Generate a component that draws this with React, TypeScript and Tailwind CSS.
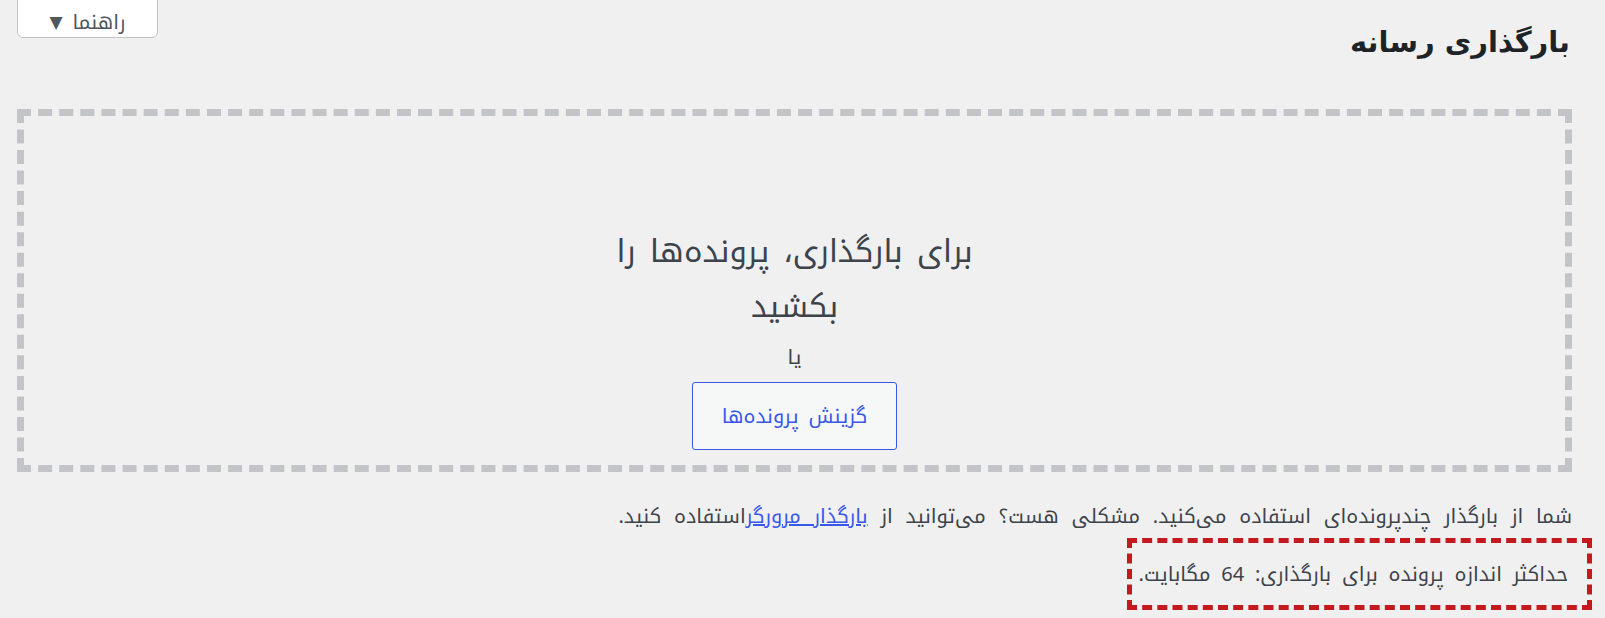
export default function App() {
  return (
    <div
      dir="rtl"
      className="min-h-[618px] w-full overflow-hidden bg-[#f0f0f1] pl-[17px] pr-[33px] font-['Noto_Kufi_Arabic','DejaVu_Sans',sans-serif] text-[#3c434a]"
    >
      {/* Title + help tab */}
      <div className="flex items-start justify-between">
        <h1 className="mr-[2px] pt-[23px] font-['DejaVu_Sans',sans-serif] text-[29px] font-bold leading-[38px] text-[#1d2327]">
          بارگذاری رسانه
        </h1>
        <button className="-mt-[12px] flex h-[50px] w-[141px] items-center justify-center gap-[10px] rounded-b-[6px] border border-[#c3c4c7] bg-white pt-[22px] pb-[4px] text-[20px] leading-none text-[#50575e]">
          <span className="leading-[24px]">راهنما</span>
          <span className="font-['DejaVu_Sans',sans-serif] text-[17px] leading-[24px]">▼</span>
        </button>
      </div>

      {/* Drop zone */}
      <div className="mt-[48px] flex h-[363px] flex-col items-center border-[7px] border-dashed border-[#c3c4c7] pt-[108px]">
        <p className="text-center text-[31px] leading-[55px] [word-spacing:4px]">
          برای بارگذاری، پرونده‌ها را
          <br />
          بکشید
        </p>
        <p className="mt-[8px] text-[20px] leading-[30px]">یا</p>
        <button className="mt-[10px] h-[68px] w-[205px] rounded-[3px] border border-[#3858e9] bg-[#f6f7f7] text-[20px] text-[#3858e9] [word-spacing:3px]">
          گزینش پرونده‌ها
        </button>
      </div>

      {/* Notes */}
      <p className="mt-[30px] text-[20px] leading-[28px] [word-spacing:6px]">
        شما از بارگذار چندپرونده‌ای استفاده می‌کنید. مشکلی هست؟ می‌توانید از{" "}
        <a href="#" className="text-[#3858e9] underline">
          بارگذار مرورگر
        </a>
        استفاده کنید.
      </p>
      <div className="mr-[-20px] mt-[8px] flex">
        <p className="border-[5px] border-dashed border-[#c41a1f] pt-[17px] pb-[17px] pl-[7px] pr-[19px] text-[20px] leading-[28px] [word-spacing:4px]">
          حداکثر اندازه پرونده برای بارگذاری: 64 مگابایت.
        </p>
      </div>
    </div>
  );
}
